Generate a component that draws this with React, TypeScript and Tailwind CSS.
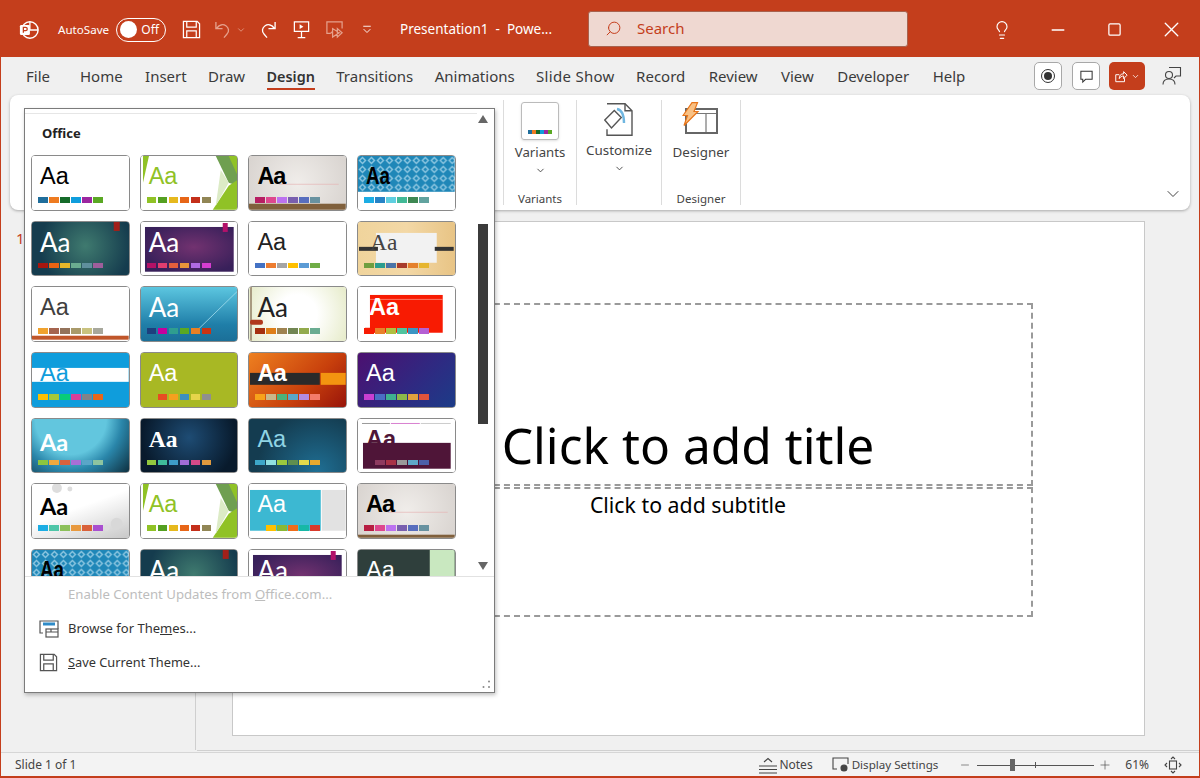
import React from 'react';
import { ChevronDown, Lightbulb, Minus, Plus, Search, Square, X } from 'lucide-react';

type Tile = {
  bg: string;
  aa: string;
  swatches: string[];
  swatchPos?: string;
  deco?: React.ReactNode;
  over?: React.ReactNode;
};

const Box = ({ children }: { children: React.ReactNode }) => (
  <svg viewBox="0 0 97 54" preserveAspectRatio="none" className="absolute inset-0 w-full h-full">
    {children}
  </svg>
);

const facetDeco = (
  <Box>
    <polygon points="2,0 8,0 2,27" fill="#90c226" />
    <polygon points="75,0 97,0 97,30 88,27" fill="#6f9f50" />
    <polygon points="88,0 97,0 97,20" fill="#90c226" />
    <polygon points="97,24 97,54 72,54 88,30" fill="#90c226" />
    <polygon points="80,14 88,27 75,50" fill="#dcebc6" />
  </Box>
);

const galleryDeco = (
  <Box>
    <rect x="30" y="28" width="60" height="0.7" fill="#e5b5b5" />
    <rect x="0" y="48" width="97" height="6" fill="#80603c" />
  </Box>
);

const parcelDeco = (id: string, h: number) => (
  <Box>
    <defs>
      <pattern id={id} width="9" height="9" patternUnits="userSpaceOnUse">
        <rect width="9" height="9" fill="#1f87b8" />
        <polygon points="4.5,0.5 8.5,4.5 4.5,8.5 0.5,4.5" fill="#8cc6e0" />
        <polygon points="4.5,2.5 6.5,4.5 4.5,6.5 2.5,4.5" fill="#1f87b8" />
      </pattern>
    </defs>
    <rect x="0" y="0" width="97" height={h} fill={`url(#${id})`} />
  </Box>
);

const ionFlag = (
  <Box>
    <rect x="82" y="0" width="6" height="9" fill="#a3201a" />
  </Box>
);

const boardroomDeco = (
  <Box>
    <defs>
      <radialGradient id="boardroom-glow" cx="0.55" cy="0.45" r="0.6">
        <stop offset="0" stopColor="#723270" />
        <stop offset="1" stopColor="#38205a" />
      </radialGradient>
    </defs>
    <rect x="4" y="5" width="89" height="45" fill="url(#boardroom-glow)" />
    <rect x="82" y="1" width="5" height="9" fill="#b3116a" />
  </Box>
);

const tiles: Tile[] = [
  {
    bg: 'bg-white',
    aa: 'text-black font-[Liberation_Sans]',
    swatches: ['bg-[#1f6e9c]', 'bg-[#ee7b21]', 'bg-[#156b2a]', 'bg-[#0f9ddc]', 'bg-[#9c27a0]', 'bg-[#5aa823]'],
  },
  {
    bg: 'bg-white',
    aa: 'text-[#90c226] font-[Liberation_Sans]',
    swatches: ['bg-[#90c226]', 'bg-[#54a021]', 'bg-[#e6b91e]', 'bg-[#e76618]', 'bg-[#c42f1a]', 'bg-[#918655]'],
    deco: facetDeco,
  },
  {
    bg: 'bg-[radial-gradient(circle,#f0edea,#d8d3cf)]',
    aa: 'text-black font-bold tracking-[-1px] font-[Liberation_Sans]',
    swatches: ['bg-[#b71e62]', 'bg-[#de478e]', 'bg-[#bc72f0]', 'bg-[#795faf]', 'bg-[#586ebe]', 'bg-[#6892a0]'],
    deco: galleryDeco,
  },
  {
    bg: 'bg-white',
    aa: 'text-black font-bold scale-x-[0.8] origin-left font-[Liberation_Sans]',
    swatches: ['bg-[#1cade4]', 'bg-[#2683c6]', 'bg-[#5fcfe0]', 'bg-[#42ba97]', 'bg-[#3e8853]', 'bg-[#62a39f]'],
    deco: parcelDeco('parcel-a', 36),
  },
  {
    bg: 'bg-[radial-gradient(circle_at_55%_45%,#3f7a6f,#153c4e_75%)]',
    aa: 'text-white font-[Lato] text-[26px]',
    swatches: ['bg-[#a5160f]', 'bg-[#ea6312]', 'bg-[#e6b729]', 'bg-[#6aac90]', 'bg-[#5f8f9d]', 'bg-[#9e5e9b]'],
    deco: ionFlag,
  },
  {
    bg: 'bg-white',
    aa: 'text-white font-[Lato] text-[26px]',
    swatches: ['bg-[#b31166]', 'bg-[#e33d6f]', 'bg-[#e45f3c]', 'bg-[#e9943a]', 'bg-[#b06be2]', 'bg-[#d53dd0]'],
    deco: boardroomDeco,
  },
  {
    bg: 'bg-white',
    aa: 'text-[#222] font-[Liberation_Sans]',
    swatches: ['bg-[#4472c4]', 'bg-[#ed7d31]', 'bg-[#a5a5a5]', 'bg-[#ffc000]', 'bg-[#5b9bd5]', 'bg-[#70ad47]'],
  },
  {
    bg: 'bg-[linear-gradient(90deg,#f0d49c,#f3d8a6_50%,#e8c485)]',
    aa: 'text-[#444] font-[Liberation_Serif] left-[12px]',
    swatches: ['bg-[#6f9e3f]', 'bg-[#2a9d8f]', 'bg-[#4a74a8]', 'bg-[#a83c2c]', 'bg-[#e5802b]', 'bg-[#e6b52e]'],
    deco: (
      <Box>
        <rect x="18" y="11" width="61" height="30" fill="#f2f2f2" />
        <rect x="1" y="25" width="19" height="4" fill="#333" />
        <rect x="77" y="25" width="19" height="4" fill="#333" />
      </Box>
    ),
  },
  {
    bg: 'bg-white',
    aa: 'text-[#404040] font-[Liberation_Sans]',
    swatches: ['bg-[#f0a22e]', 'bg-[#a5644e]', 'bg-[#94735b]', 'bg-[#a99a6a]', 'bg-[#c9c27f]', 'bg-[#a8a89c]'],
    deco: (
      <Box>
        <rect x="0" y="49" width="97" height="4" fill="#c0562a" />
      </Box>
    ),
  },
  {
    bg: 'bg-[linear-gradient(180deg,#5cc6e0,#1f7ea8_70%,#1b6f98)]',
    aa: 'text-white font-[Lato] text-[26px]',
    swatches: ['bg-[#1c3f7e]', 'bg-[#c5009e]', 'bg-[#2f9e8f]', 'bg-[#5aa823]', 'bg-[#e88024]', 'bg-[#c93414]'],
    deco: (
      <Box>
        <line x1="58" y1="42" x2="97" y2="4" stroke="#a6e0ee" strokeWidth="0.8" />
      </Box>
    ),
  },
  {
    bg: 'bg-[radial-gradient(circle_at_50%_50%,#fff_35%,#e6ebc9)]',
    aa: 'text-[#222] font-[Lato] text-[26px]',
    swatches: ['bg-[#a53010]', 'bg-[#de7e18]', 'bg-[#9f8351]', 'bg-[#728653]', 'bg-[#92aa4c]', 'bg-[#6aac91]'],
    deco: (
      <Box>
        <rect x="1" y="0" width="2" height="54" fill="#a89a80" />
        <rect x="1" y="33" width="13" height="5" rx="2" fill="#b0381c" />
      </Box>
    ),
  },
  {
    bg: 'bg-white',
    aa: 'text-white font-bold left-[11px] font-[Liberation_Sans]',
    swatches: ['bg-[#f81b02]', 'bg-[#e8812a]', 'bg-[#afbf41]', 'bg-[#50c49f]', 'bg-[#3b95c4]', 'bg-[#b560d4]'],
    deco: (
      <Box>
        <rect x="12" y="8" width="73" height="38" fill="#f81b02" />
        <rect x="12" y="12" width="73" height="0.7" fill="#ff9d90" />
        <rect x="7" y="41" width="10" height="5" fill="#f81b02" />
      </Box>
    ),
  },
  {
    bg: 'bg-[#0f9ddc]',
    aa: 'text-[#0f9ddc] font-[Liberation_Sans]',
    swatches: ['bg-[#ffc000]', 'bg-[#a5c83a]', 'bg-[#08cc78]', 'bg-[#d93f9a]', 'bg-[#828288]', 'bg-[#e8661a]'],
    deco: (
      <Box>
        <rect x="0" y="15" width="97" height="14" fill="#fff" />
      </Box>
    ),
  },
  {
    bg: 'bg-[#a8b824]',
    aa: 'text-white font-[Liberation_Sans]',
    swatchPos: 'left-[17px]',
    swatches: ['bg-[#e84c22]', 'bg-[#f5a01e]', 'bg-[#3d8fbf]', 'bg-[#e5d44b]', 'bg-[#8f8f8f]'],
  },
  {
    bg: 'bg-[linear-gradient(135deg,#ee8020,#c8400c_60%,#98140a)]',
    aa: 'text-white font-bold tracking-[-0.5px] font-[Liberation_Sans]',
    swatches: ['bg-[#f7a21b]', 'bg-[#c8b88a]', 'bg-[#4db27a]', 'bg-[#5aa6c8]', 'bg-[#b28be0]', 'bg-[#f47c6a]'],
    deco: (
      <Box>
        <rect x="1" y="20" width="70" height="12" fill="#2a2a2a" />
        <rect x="72" y="20" width="25" height="12" fill="#f39410" />
      </Box>
    ),
  },
  {
    bg: 'bg-[linear-gradient(135deg,#4c1070,#2e2a82_60%,#1c3c88)]',
    aa: 'text-white font-[Liberation_Sans]',
    swatches: ['bg-[#c93fd1]', 'bg-[#4a6fc4]', 'bg-[#3fb28f]', 'bg-[#8cb84a]', 'bg-[#e0a13e]', 'bg-[#e0533a]'],
  },
  {
    bg: 'bg-[radial-gradient(circle_at_40%_0%,#62c6de_45%,#2a86aa_65%,#0e3040)]',
    aa: 'text-white font-bold font-[Lato] top-[8px]',
    swatches: ['bg-[#8cc63f]', 'bg-[#f0a93e]', 'bg-[#d8623e]', 'bg-[#a86fd6]', 'bg-[#5aa6c8]', 'bg-[#8dc4a0]'],
  },
  {
    bg: 'bg-[radial-gradient(circle_at_50%_35%,#1e4c74,#081a2c_80%)]',
    aa: 'text-white font-bold font-[Liberation_Serif]',
    swatches: ['bg-[#93c83e]', 'bg-[#3fbc9a]', 'bg-[#3d9cc9]', 'bg-[#a26dd6]', 'bg-[#d44a88]', 'bg-[#e09a3e]'],
  },
  {
    bg: 'bg-[radial-gradient(circle_at_70%_100%,#1f6f94,#143c50_70%)]',
    aa: 'text-[#8fd4e4] font-[Liberation_Sans]',
    swatches: ['bg-[#3ca7c9]', 'bg-[#8fe0e0]', 'bg-[#9ac93e]', 'bg-[#5f8f4f]', 'bg-[#e3d94a]', 'bg-[#e8a92e]'],
  },
  {
    bg: 'bg-white',
    aa: 'text-[#4f1538] font-bold font-[Liberation_Sans]',
    swatchPos: 'left-[17px]',
    swatches: ['bg-[#8e3a5f]', 'bg-[#a83246]', 'bg-[#9a9a9a]', 'bg-[#5ea8c8]', 'bg-[#4c5fa8]'],
    deco: (
      <Box>
        <rect x="4" y="4" width="28" height="1" fill="#999" />
        <rect x="33" y="4" width="29" height="1" fill="#d980d0" />
        <rect x="63" y="4" width="30" height="1" fill="#ccc" />
      </Box>
    ),
    over: (
      <Box>
        <rect x="5" y="24" width="88" height="26" fill="#4f1538" />
      </Box>
    ),
  },
  {
    bg: 'bg-[linear-gradient(160deg,#fff_45%,#c8c8c8)]',
    aa: 'text-black font-[Lato] font-bold top-[7px]',
    swatches: ['bg-[#1cade4]', 'bg-[#4fc6a8]', 'bg-[#8cc05a]', 'bg-[#e8993e]', 'bg-[#d9613a]', 'bg-[#a94fd0]'],
    deco: (
      <Box>
        <circle cx="25" cy="4" r="5" fill="#ddd" />
        <circle cx="38" cy="5" r="2.5" fill="#ddd" />
        <circle cx="85" cy="40" r="6" fill="#d8d8d8" />
        <circle cx="75" cy="44" r="3" fill="#ddd" />
      </Box>
    ),
  },
  {
    bg: 'bg-white',
    aa: 'text-[#90c226] font-[Liberation_Sans]',
    swatches: ['bg-[#90c226]', 'bg-[#54a021]', 'bg-[#e6b91e]', 'bg-[#e76618]', 'bg-[#c42f1a]', 'bg-[#918655]'],
    deco: facetDeco,
  },
  {
    bg: 'bg-white',
    aa: 'text-white font-[Liberation_Sans]',
    swatchPos: 'left-[17px]',
    swatches: ['bg-[#ffc000]', 'bg-[#8ab833]', 'bg-[#ef6c1a]', 'bg-[#17b8a6]', 'bg-[#d93a2b]'],
    deco: (
      <Box>
        <rect x="1" y="6" width="71" height="41" fill="#3cb8d2" />
        <rect x="73" y="6" width="24" height="41" fill="#e2e2e2" />
      </Box>
    ),
  },
  {
    bg: 'bg-[radial-gradient(circle,#f0edea,#d8d3cf)]',
    aa: 'text-black font-bold tracking-[-1px] font-[Liberation_Sans]',
    swatches: ['bg-[#b71e42]', 'bg-[#de478e]', 'bg-[#bc72f0]', 'bg-[#795faf]', 'bg-[#586ebe]', 'bg-[#6892a0]'],
    deco: (
      <Box>
        <rect x="30" y="28" width="60" height="0.7" fill="#e5b5b5" />
        <rect x="0" y="51" width="97" height="3" fill="#80603c" />
      </Box>
    ),
  },
  {
    bg: 'bg-white',
    aa: 'text-black font-bold scale-x-[0.8] origin-left font-[Liberation_Sans]',
    swatches: [],
    deco: parcelDeco('parcel-b', 36),
  },
  {
    bg: 'bg-[radial-gradient(circle_at_55%_45%,#3f7a6f,#153c4e_75%)]',
    aa: 'text-white font-[Lato] text-[26px]',
    swatches: [],
    deco: ionFlag,
  },
  { bg: 'bg-white', aa: 'text-white font-[Lato] text-[26px]', swatches: [], deco: boardroomDeco },
  {
    bg: 'bg-[#2f3f3c]',
    aa: 'text-white font-[Liberation_Sans]',
    swatches: [],
    deco: (
      <Box>
        <rect x="72" y="0" width="25" height="54" fill="#c9e8c0" />
      </Box>
    ),
  },
];

const ThemeTile = ({ t }: { t: Tile }) => (
  <div className="rounded-[4px] border-[1.5px] border-[#8a8a8a] bg-white">
    <div className={`relative w-full h-full overflow-hidden rounded-[2px] ${t.bg}`}>
      {t.deco}
      <span className={`absolute left-[8px] top-[5px] text-[23.5px] leading-[30px] ${t.aa}`}>Aa</span>
      {t.over}
      <div className={`absolute top-[41px] flex gap-[1.4px] ${t.swatchPos ?? 'left-[6px]'}`}>
        {t.swatches.map((c, i) => (
          <div key={i} className={`w-[9.6px] h-[5.6px] ${c}`} />
        ))}
      </div>
    </div>
  </div>
);

const SaveIcon = ({ className }: { className?: string }) => (
  <svg viewBox="0 0 20 20" className={className} fill="none" stroke="currentColor" strokeWidth="1.3">
    <path d="M1.5 1.5h14.5l2.5 2.5v14.5h-17z" />
    <path d="M5 1.5v6h10v-6M5 18.5v-7h10v7" />
  </svg>
);

const PptLogo = () => (
  <svg viewBox="0 0 22 22" className="w-[20px] h-[20px]">
    <circle cx="12" cy="11" r="9" fill="none" stroke="#fff" strokeWidth="1.6" />
    <path d="M12 2v9h9" fill="none" stroke="#fff" strokeWidth="1.4" />
    <rect x="1" y="5.5" width="11" height="11" rx="1.5" fill="#fff" />
    <path d="M4.8 14V8h2.4a1.9 1.9 0 0 1 0 3.8H4.8" fill="none" stroke="#c43e1c" strokeWidth="1.4" />
  </svg>
);

const TitleBar = () => (
  <div className="h-[57px] pt-[2px] flex items-center text-white shrink-0">
    <div className="ml-[18px]"><PptLogo /></div>
    <span className="ml-[19px] text-[11.6px] w-[50px]">AutoSave</span>
    <div className="ml-[8px] w-[50px] h-[24px] rounded-full border border-white flex items-center justify-between pl-[3px] pr-[6px]">
      <div className="w-[17px] h-[17px] rounded-full bg-white" />
      <span className="text-[12px]">Off</span>
    </div>
    <SaveIcon className="ml-[16px] w-[19px] h-[19px]" />
    <svg viewBox="0 0 20 20" className="ml-[13px] w-[19px] h-[19px] text-[#e5a08c]" fill="none" stroke="currentColor" strokeWidth="1.4">
      <path d="M2 2v7h7M2.5 9c3-4 7-5 10-3 3 2 4 6 1 9l-3 3.5" />
    </svg>
    <ChevronDown className="ml-[3px] w-[10px] h-[10px] text-[#e5a08c]" />
    <svg viewBox="0 0 20 20" className="ml-[12px] w-[19px] h-[19px]" fill="none" stroke="currentColor" strokeWidth="1.4">
      <path d="M18 2v7h-7M17.5 9c-3-4-7-5-10-3-3 2-4 6-1 9l3 3.5" />
    </svg>
    <svg viewBox="0 0 20 20" className="ml-[15px] w-[19px] h-[19px]" fill="none" stroke="currentColor" strokeWidth="1.3">
      <path d="M2.5 2h15v10h-15zM10 12v6M6 18.5h8" />
      <path d="M8 4.5v5l4-2.5z" fill="currentColor" stroke="none" />
    </svg>
    <svg viewBox="0 0 20 20" className="ml-[14px] w-[19px] h-[19px] text-[#e5a08c]" fill="none" stroke="currentColor" strokeWidth="1.3">
      <path d="M6 14H2V2h16v7M6 14l2-2" />
      <path d="M8 9v9l7-4.5zM13 9v9l5-4.5z" />
    </svg>
    <svg viewBox="0 0 12 12" className="ml-[18px] w-[10px] h-[10px]" fill="none" stroke="currentColor" strokeWidth="1.1">
      <path d="M1.5 1.5h9M2 5l4 4 4-4" />
    </svg>
    <span className="ml-[28px] w-[148px] text-[13.5px] whitespace-pre">Presentation1  -  Powe...</span>
    <div className="ml-[40px] w-[320px] h-[36px] rounded-[3px] bg-[#efd8d1] border border-[#a8624e] flex items-center pl-[16px] -mt-[2px]">
      <Search className="w-[17px] h-[17px] text-[#c43e1c] -scale-x-100" strokeWidth={1.4} />
      <span className="ml-[15px] text-[15px] text-[#c43e1c]">Search</span>
    </div>
    <Lightbulb className="ml-[84px] w-[20px] h-[20px]" strokeWidth={1.4} />
    <Minus className="ml-[36px] w-[20px] h-[20px]" strokeWidth={1.6} />
    <Square className="ml-[39px] w-[15px] h-[15px]" strokeWidth={2} />
    <X className="ml-[37px] w-[25px] h-[25px]" strokeWidth={1.3} />
  </div>
);

const TabRow = () => (
  <div className="h-[38px] pt-[1px] bg-[#f0f0f0] flex items-center shrink-0 text-[#3b3b3b] text-[15px]">
    <span className="ml-[25px] mr-[30px]">File</span>
    <div className="flex items-baseline gap-[21.4px]">
      <span>Home</span>
      <span className="ml-px">Insert</span>
      <span>Draw</span>
      <span className="relative font-semibold text-[#333] text-[14.4px]">
        Design
        <span className="absolute left-0 right-0 -bottom-[2px] h-[2px] bg-[#c43e1c]" />
      </span>
      <span>Transitions</span>
      <span>Animations</span>
      <span className="tracking-[0.3px]">Slide Show</span>
      <span>Record</span>
      <span className="ml-[2px]">Review</span>
      <span className="ml-[2px]">View</span>
      <span className="ml-[2px]">Developer</span>
      <span className="ml-[2px]">Help</span>
    </div>
    <div className="ml-auto flex items-center -mt-[1px]">
      <div className="w-[28px] h-[28px] rounded-[5px] bg-white border border-[#a8a8a8] flex items-center justify-center">
        <div className="w-[14px] h-[14px] rounded-full border border-[#333] flex items-center justify-center">
          <div className="w-[8px] h-[8px] rounded-full bg-[#333]" />
        </div>
      </div>
      <div className="ml-[10px] w-[28px] h-[28px] rounded-[5px] bg-white border border-[#a8a8a8] flex items-center justify-center">
        <svg viewBox="0 0 16 16" className="w-[15px] h-[15px]" fill="none" stroke="#333" strokeWidth="1.1">
          <path d="M2 2.5h12v8.5H7l-3 3v-3H2z" />
        </svg>
      </div>
      <div className="ml-[9px] w-[36px] h-[28px] rounded-[5px] bg-[#c43e1c] flex items-center justify-center gap-[3px]">
        <svg viewBox="0 0 16 16" className="w-[14px] h-[14px]" fill="none" stroke="#fff" strokeWidth="1.1">
          <path d="M6 6.5H2v8h10v-4M6 11c0-4 2-5.5 5-5.5V3l4 4-4 4V8c-2 0-4 1-5 3z" />
        </svg>
        <ChevronDown className="w-[9px] h-[9px] text-white" strokeWidth={2} />
      </div>
      <svg viewBox="0 0 20 20" className="ml-[17px] mr-[17px] w-[20px] h-[20px]" fill="none" stroke="#444" strokeWidth="1.1">
        <path d="M7 1.5h11.5v8.5H14l-2 2" />
        <circle cx="7" cy="9" r="3.5" />
        <path d="M1 18.5c0-3.5 2.5-5.5 6-5.5s6 2 6 5.5" />
      </svg>
    </div>
  </div>
);

const Ribbon = () => (
  <div className="mx-[9px] h-[115px] shrink-0 rounded-[8px] bg-white shadow-[0_1px_3px_rgba(0,0,0,0.3)] flex text-[#444] relative z-10 py-[5px]">
    <div className="w-[494px] border-r border-[#dcdcdc]" />
    <div className="w-[73px] border-r border-[#dcdcdc] flex flex-col items-center">
      <div className="mt-[2px] w-[38px] h-[38px] rounded-[3px] border border-[#bbb] flex items-end justify-center pb-[5px] gap-0 shadow-sm">
        {['bg-[#1f6e9c]', 'bg-[#ee7b21]', 'bg-[#156b2a]', 'bg-[#0f9ddc]', 'bg-[#9c27a0]', 'bg-[#5aa823]'].map((c) => (
          <div key={c} className={`w-[4px] h-[4px] ${c}`} />
        ))}
      </div>
      <span className="mt-[2px] text-[13.2px] leading-[20px]">Variants</span>
      <ChevronDown className="mt-[3px] w-[11px] h-[11px]" strokeWidth={2} />
      <span className="mt-auto mb-[-2px] text-[11.5px] leading-[16px]">Variants</span>
    </div>
    <div className="w-[85px] border-r border-[#dcdcdc] flex flex-col items-center">
      <svg viewBox="0 0 29 33" className="mt-[3px] w-[29px] h-[33px] -translate-x-[1px]" fill="none" stroke="#555" strokeWidth="1.4">
        <path d="M3 .8h18l7 7v24.5H3v-6" fill="#fff" />
        <path d="M21 .8v7h7" />
        <path d="M.8 17l9.5-9.5 7 7L7.5 25z" fill="#fff" />
        <path d="M13 6c5 1 7 6 7 14" stroke="#6fb6e0" strokeWidth="2.4" />
      </svg>
      <span className="mt-[4px] text-[13.4px] leading-[20px]">Customize</span>
      <ChevronDown className="mt-[3px] w-[11px] h-[11px]" strokeWidth={2} />
    </div>
    <div className="w-[79px] border-r border-[#dcdcdc] flex flex-col items-center">
      <svg viewBox="0 0 36 34" className="mt-[2px] w-[36px] h-[34px] -translate-x-[1px]">
        <rect x="4" y="7" width="31" height="24" fill="#fff" stroke="#666" strokeWidth="2" />
        <path d="M5 11.5h29M24 12v18" stroke="#777" strokeWidth="1.2" fill="none" />
        <path d="M10 .7h5.5L12 9.5h4L2 23.5 5.5 13.5H1z" fill="#f9c184" stroke="#e8751a" strokeWidth="1.2" />
      </svg>
      <span className="mt-[6px] text-[13.4px] leading-[20px]">Designer</span>
      <span className="mt-auto mb-[-2px] text-[11.5px] leading-[16px]">Designer</span>
    </div>
    <ChevronDown className="absolute right-[7px] bottom-[6px] w-[20px] h-[20px]" strokeWidth={1.2} />
  </div>
);

const ThemePopup = () => (
  <div className="absolute left-[24px] top-[108px] w-[471px] h-[585px] bg-white border border-[#7b7b7b] shadow-[1px_2px_4px_rgba(0,0,0,0.25)] z-20 flex flex-col text-[#333]">
    <div className="h-[467px] shrink-0 flex overflow-hidden">
      <div className="flex-1 min-w-0">
        <div className="h-[4px] border-b border-[#e6e6e6] box-content" />
        <div className="h-[41px] pl-[17px] pt-[9px] text-[13px] font-bold text-[#222] leading-[20px]">Office</div>
        <div className="pl-[6px] grid grid-cols-[repeat(4,98.7px)] auto-rows-[55.7px] gap-x-[10px] gap-y-[10px]">
          {tiles.map((t, i) => (
            <ThemeTile key={i} t={t} />
          ))}
        </div>
      </div>
      <div className="w-[12px] mr-[5px] flex flex-col items-center pt-[6px] pb-[6px]">
        <div className="w-0 h-0 border-x-[5.5px] border-x-transparent border-b-[8px] border-b-[#666]" />
        <div className="mt-[101px] w-[10px] h-[200px] bg-[#3b3b3b]" />
        <div className="mt-auto w-0 h-0 border-x-[5.5px] border-x-transparent border-t-[8px] border-t-[#666]" />
      </div>
    </div>
    <div className="border-t border-[#e2e2e2] pt-[1px] text-[13px]">
      <div className="h-[34px] flex items-center pl-[43px] text-[#bdbdbd] text-[13.2px]">
        <span>Enable Content Updates from <u>O</u>ffice.com...</span>
      </div>
      <div className="h-[34px] flex items-center pl-[14px]">
        <svg viewBox="0 0 20 20" className="w-[20px] h-[20px] mr-[9px]" fill="none" stroke="#555" strokeWidth="1.2">
          <path d="M4 14H1V2h18v8" />
          <rect x="4" y="3.5" width="12" height="3" fill="#2e8bc8" stroke="none" />
          <rect x="7" y="10" width="12" height="8" fill="#fff" />
          <path d="M7 13h12M12 10v3" />
        </svg>
        <span>Browse for The<u>m</u>es...</span>
      </div>
      <div className="h-[33px] flex items-center pl-[14px]">
        <SaveIcon className="w-[19px] h-[19px] mr-[10px] text-[#555]" />
        <span className="text-[12.8px]"><u>S</u>ave Current Theme...</span>
      </div>
    </div>
    <svg viewBox="0 0 9 9" className="absolute right-[3px] bottom-[3px] w-[9px] h-[9px]" fill="#888">
      <circle cx="7" cy="1.5" r="1" />
      <circle cx="7" cy="7" r="1" />
      <circle cx="1.5" cy="7" r="1" />
    </svg>
  </div>
);

const Workspace = () => (
  <div className="flex-1 min-h-0 flex bg-[#f0f0f0]">
    <div className="w-[195px] shrink-0 border-r border-[#cfcfcf] mb-[2px] pl-[15px] pt-[18px] text-[15px] text-[#c43e1c] leading-[20px]">1</div>
    <div className="flex-1 min-w-0 border-b border-[#d0d0d0] ml-[1px] mb-[1px] pl-[35px] pt-[11px]">
      <div className="w-[913px] h-[515px] bg-white border border-[#c8c8c8] pl-[110px] pt-[81px] text-black">
        <div className="w-[690px] h-[183px] border-2 border-dashed border-[#9a9a9a] flex justify-center items-end pb-[9px] text-[49.7px] leading-[60px]">
          Click to add title
        </div>
        <div className="w-[690px] h-[130px] mt-px border-2 border-dashed border-[#9a9a9a] flex justify-center pt-[2px] text-[21.3px] leading-[28px]">
          Click to add subtitle
        </div>
      </div>
    </div>
  </div>
);

const StatusBar = () => (
  <div className="h-[24px] pt-px shrink-0 bg-[#f3f3f3] border-t border-[#d6d6d6] flex items-center text-[12px] text-[#444]">
    <span className="ml-[14px]">Slide 1 of 1</span>
    <svg viewBox="0 0 20 18" className="ml-[682px] w-[20px] h-[18px]" fill="none" stroke="#444" strokeWidth="1.1">
      <path d="M1 10h18M1 13.5h18M1 17h18M6 6l4-3.5L14 6" />
    </svg>
    <span className="ml-[1px] text-[12px]">Notes</span>
    <svg viewBox="0 0 18 16" className="ml-[19px] w-[18px] h-[16px]" fill="none" stroke="#444" strokeWidth="1.1">
      <path d="M5 12H1V1h15v6" />
      <circle cx="12" cy="11" r="3" fill="#444" />
    </svg>
    <span className="ml-[2px] text-[11.6px]">Display Settings</span>
    <Minus className="ml-[21px] w-[12px] h-[12px]" strokeWidth={1.2} />
    <div className="ml-[6px] relative w-[117px] h-px bg-[#555]">
      <div className="absolute left-[33px] -top-[6px] w-[5px] h-[12px] bg-[#666]" />
      <div className="absolute left-[58px] -top-[3px] w-px h-[6px] bg-[#555]" />
    </div>
    <Plus className="ml-[4px] w-[14px] h-[14px]" strokeWidth={1.1} />
    <span className="ml-[13px]">61%</span>
    <svg viewBox="0 0 18 18" className="ml-[15px] w-[18px] h-[18px]" fill="none" stroke="#444" strokeWidth="1.1">
      <rect x="5.5" y="5" width="7" height="8" />
      <path d="M7 3l2-2 2 2M7 15l2 2 2-2M3 7L1 9l2 2M15 7l2 2-2 2" />
    </svg>
  </div>
);

const App: React.FC = () => {
  return (
    <div className="relative w-[1200px] h-[778px] overflow-hidden bg-[#c43e1c] flex flex-col pl-px pr-px pb-[2px] font-['Noto_Sans',sans-serif]">
      <TitleBar />
      <TabRow />
      <div className="flex-1 min-h-0 flex flex-col bg-[#f0f0f0]">
        <Ribbon />
        <Workspace />
        <StatusBar />
      </div>
      <ThemePopup />
    </div>
  );
};

export default App;
